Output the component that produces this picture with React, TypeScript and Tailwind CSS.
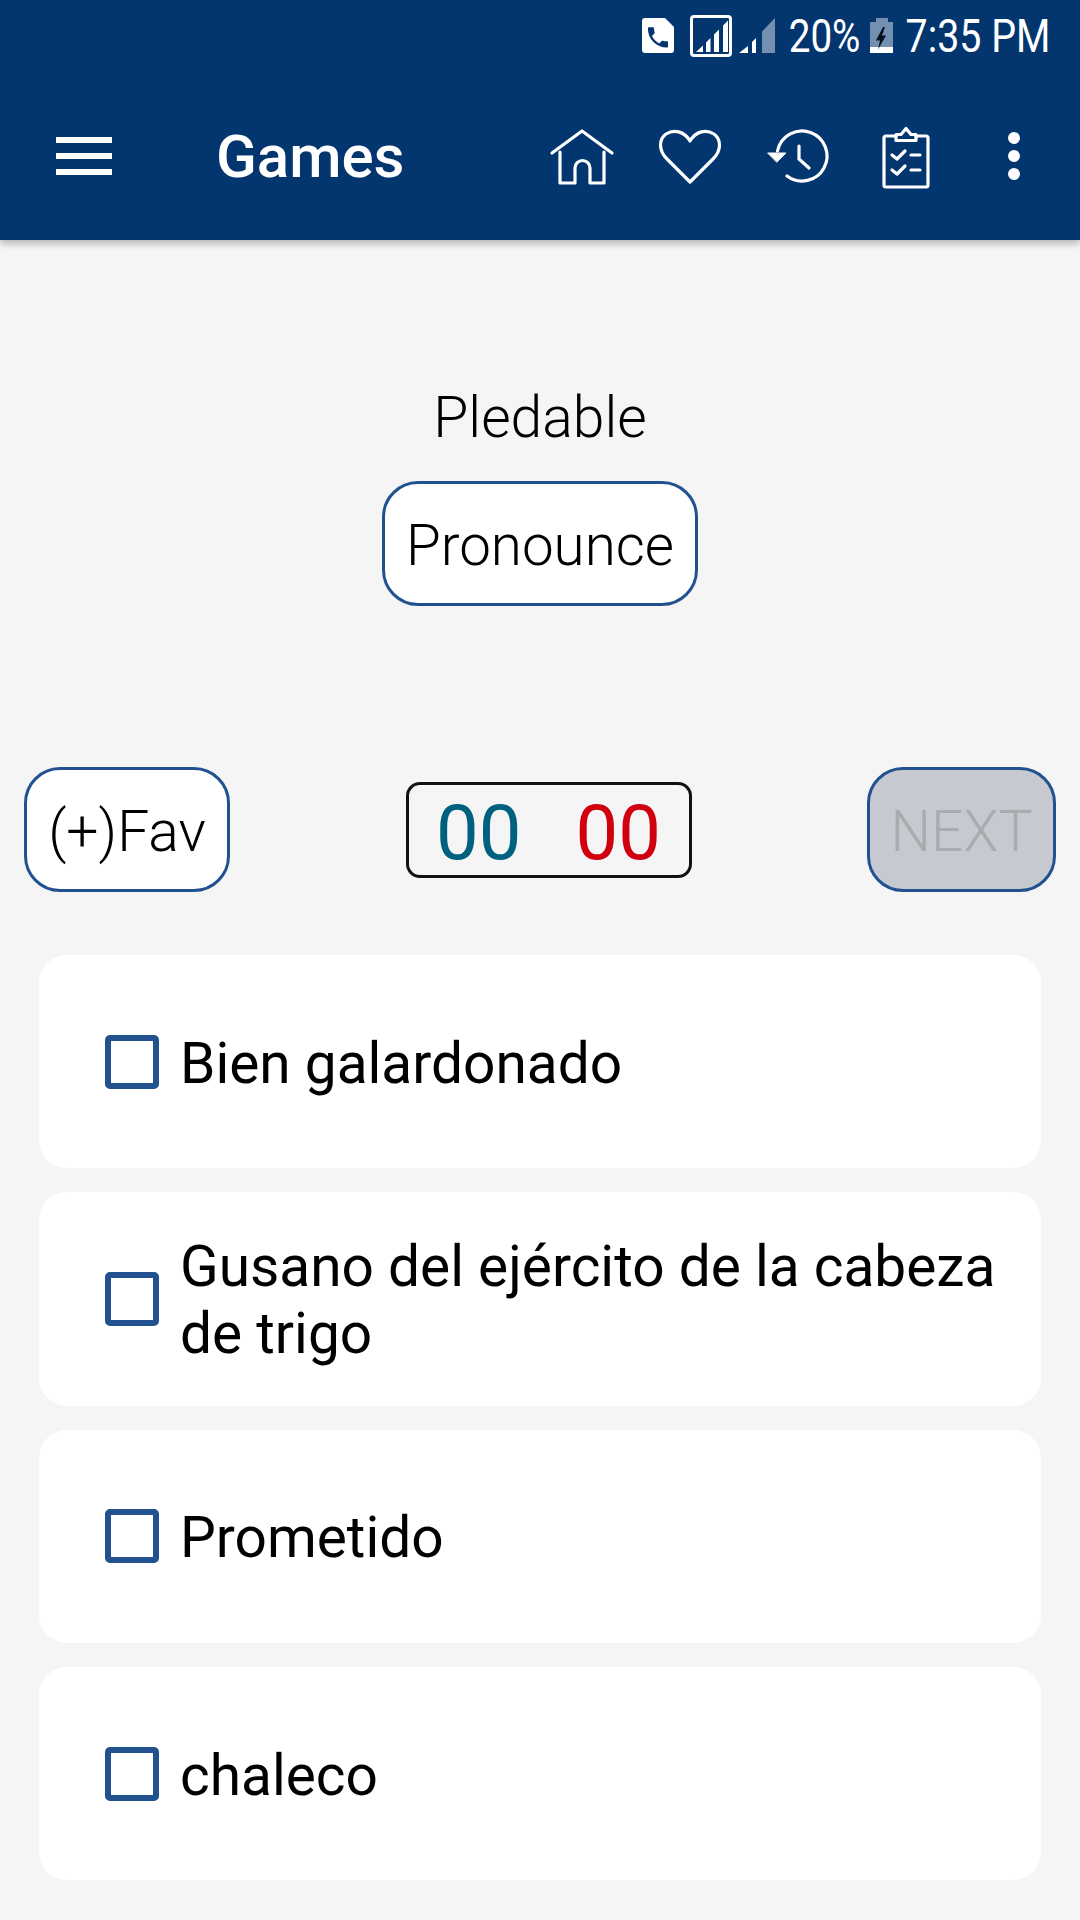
const font = "font-['Roboto',sans-serif]";

function PhoneBadge() {
  return (
    <svg width="32" height="36" viewBox="642 18 32 36">
      <path d="M645 18H665L674 27V50a3 3 0 0 1-3 3H645a3 3 0 0 1-3-3V21a3 3 0 0 1 3-3Z" fill="#fff" />
      <path
        transform="translate(644.5 24) scale(1.12)"
        fill="#03356f"
        d="M6.62 10.79c1.44 2.83 3.76 5.14 6.59 6.59l2.2-2.2c.27-.27.67-.36 1.02-.24 1.12.37 2.33.57 3.57.57.55 0 1 .45 1 1V20c0 .55-.45 1-1 1-9.39 0-17-7.61-17-17 0-.55.45-1 1-1h3.5c.55 0 1 .45 1 1 0 1.25.2 2.45.57 3.57.11.35.03.74-.25 1.02l-2.2 2.2z"
      />
    </svg>
  );
}

function SignalBox() {
  return (
    <svg width="42" height="42" viewBox="689 15 42 42" className="ml-[16px]">
      <rect x="690.5" y="16.5" width="39" height="39" rx="2.5" fill="none" stroke="#fff" strokeWidth="3" />
      <path d="M695 52l7-6.5V52Z M705 52V42.5l4.5-4.5V52Z M713 52V34.5l5-5V52Z M722 52V25.5l5-5V52Z" fill="#fff" />
    </svg>
  );
}

function SignalTwo() {
  return (
    <svg width="36" height="36" viewBox="738 18 36 36" className="ml-[7px]">
      <path d="M738 53l9-7v7Z M751 53V42l4-4v15Z" fill="#fff" />
      <path d="M761 53V31.5L774 18V53Z" fill="#fff" fillOpacity="0.45" />
    </svg>
  );
}

function Battery() {
  return (
    <svg width="23" height="36" viewBox="869 18 23 36" className="ml-[10px]">
      <path d="M869 22H875V18H887V22H892V47H869Z" fill="#fff" fillOpacity="0.45" />
      <rect x="869" y="47" width="23" height="6" fill="#fff" />
      <path d="M882 27L875 40.5H879L877 49.5L885 35.5H881L884 27Z" fill="#0a1020" />
    </svg>
  );
}

function HomeIcon() {
  return (
    <svg width="68" height="68" viewBox="548 121 68 68" fill="none" stroke="#fff" strokeWidth="3.2" strokeLinecap="round" strokeLinejoin="round">
      <path d="M552 152L582 130L612 152" />
      <path d="M560 151V182H575V167a7.5 7.5 0 0 1 15 0V182H604V151" />
    </svg>
  );
}

function HeartIcon() {
  return (
    <svg width="68" height="68" viewBox="656 121 68 68" fill="none" stroke="#fff" strokeWidth="3.2" strokeLinejoin="round">
      <path d="M690 181L667 158C658 149 659 138 666 133C674 128 684 130 690 140C696 130 706 128 714 133C721 138 722 149 713 158Z" />
    </svg>
  );
}

function HistoryIcon() {
  return (
    <svg width="68" height="68" viewBox="764 121 68 68" fill="none" stroke="#fff" strokeWidth="3.2" strokeLinecap="round" strokeLinejoin="round">
      <path d="M777.5 150A25 25 0 1 1 787 175" />
      <path d="M768 152H786L777 161Z" fill="#fff" strokeWidth="1" />
      <path d="M799 145V158L809 167" />
    </svg>
  );
}

function ClipboardIcon() {
  return (
    <svg width="68" height="68" viewBox="872 121 68 68" fill="none" stroke="#fff" strokeWidth="3.2" strokeLinecap="round" strokeLinejoin="round">
      <path d="M896 135H886a2 2 0 0 0-2 2V184a2 2 0 0 0 2 2H926a2 2 0 0 0 2-2V137a2 2 0 0 0-2-2H916" />
      <path d="M896 139.5V133.5H901L906 127.5L911 133.5H916V139.5Z" />
      <path d="M892 154L897 158L905 150 M892 169L897 173L905 165" />
      <path d="M911 154H920 M911 169H920" />
    </svg>
  );
}

function Answer({ text }: { text: string }) {
  return (
    <div className="flex h-[213.3px] items-center rounded-[28px] bg-white pl-[66px] pr-[30px]">
      <div className="h-[54px] w-[54px] shrink-0 rounded-[5px] border-[6px] border-[#21528f]" />
      <span className="ml-[21px] pt-[3px] text-[56.8px] leading-[67px] text-black">{text}</span>
    </div>
  );
}

export default function App() {
  const answers = ["Bien galardonado", "Gusano del ejército de la cabeza de trigo", "Prometido", "chaleco"];

  return (
    <div className={`${font} flex h-[1920px] w-[1080px] flex-col bg-[#f5f5f5]`}>
      <header className="relative h-[240px] shrink-0 bg-[#03356f] shadow-[0_3px_8px_rgba(0,0,0,0.3)]">
        {/* status bar */}
        <div className="flex h-[71px] items-center justify-end pr-[30px] text-white">
          <PhoneBadge />
          <SignalBox />
          <SignalTwo />
          <span className="ml-[15px] flex w-[70px] justify-end whitespace-nowrap">
            <span className="inline-block origin-right scale-x-[0.84] text-[46px] leading-none">20%</span>
          </span>
          <Battery />
          <span className="ml-[14px] flex w-[143px] justify-end whitespace-nowrap">
            <span className="inline-block origin-right scale-x-[0.855] text-[46px] leading-none">7:35 PM</span>
          </span>
        </div>

        {/* toolbar */}
        <div className="flex h-[169px] items-center pl-[56px] pr-[52px]">
          <div className="flex w-[56px] flex-col gap-[10px]">
            <div className="h-[6px] bg-white" />
            <div className="h-[6px] bg-white" />
            <div className="h-[6px] bg-white" />
          </div>
          <h1 className="ml-[104px] pt-[2px] text-[60px] font-medium text-white">Games</h1>
          <div className="ml-auto flex items-center gap-[40px]">
            <HomeIcon />
            <HeartIcon />
            <HistoryIcon />
            <ClipboardIcon />
            <div className="ml-[20px] flex w-[28px] flex-col items-center gap-[6px]">
              <div className="h-[12px] w-[12px] rounded-full bg-white" />
              <div className="h-[12px] w-[12px] rounded-full bg-white" />
              <div className="h-[12px] w-[12px] rounded-full bg-white" />
            </div>
          </div>
        </div>
      </header>

      <main className="flex flex-1 flex-col">
        <div className="flex flex-col items-center pt-[140px]">
          <div className="h-[76px] text-[57px] font-light leading-[76px] text-black">Pledable</div>
          <button className="mt-[25px] h-[125px] w-[316px] rounded-[36px] border-[3px] border-[#21528f] bg-white pt-[5px] text-[56.5px] font-light text-black">
            Pronounce
          </button>
        </div>

        <div className="mt-[161px] flex items-center justify-between px-[24px]">
          <button className="h-[125px] w-[206px] rounded-[36px] border-[3px] border-[#21528f] bg-white pt-[5px] text-[57px] font-light text-black">
            (+)Fav
          </button>
          <div className="flex h-[96px] w-[286px] items-center justify-center gap-[54px] rounded-[14px] border-[3px] border-[#111] pt-[6px] text-[76px]">
            <span className="text-[#00607f]">00</span>
            <span className="text-[#d0000f]">00</span>
          </div>
          <button className="h-[125px] w-[189px] rounded-[36px] border-[3px] border-[#21528f] bg-[#c6c9cf] pt-[5px] text-[57px] font-light text-[#a9abaf]">
            NEXT
          </button>
        </div>

        <div className="mt-[63px] flex flex-col gap-[24px] px-[39px]">
          {answers.map((a) => (
            <Answer key={a} text={a} />
          ))}
        </div>
      </main>
    </div>
  );
}
